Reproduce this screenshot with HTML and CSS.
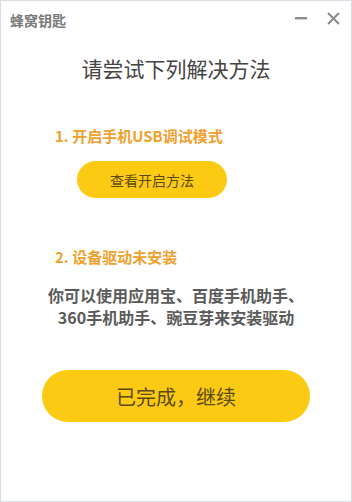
FILE: index.html
```html
<!DOCTYPE html>
<html lang="zh-CN">
<head>
    <meta charset="UTF-8">
    <title>蜂窝钥匙</title>
    <link rel="stylesheet" href="styles.css">
</head>
<body>
    <div class="window">
        <div class="titlebar">
            <span class="app-name">蜂窝钥匙</span>
            <div class="controls">
                <span class="ctrl-btn">
                    <svg width="12" height="12" viewBox="0 0 12 12"><rect x="0" y="5" width="12" height="2.4" fill="#8a8a8a"/></svg>
                </span>
                <span class="ctrl-btn">
                    <svg width="13" height="13" viewBox="0 0 13 13"><path d="M1 1 L12 12 M12 1 L1 12" stroke="#8a8a8a" stroke-width="2"/></svg>
                </span>
            </div>
        </div>

        <h1 class="heading">请尝试下列解决方法</h1>

        <div class="step">
            <div class="step-title">1. 开启手机USB调试模式</div>
            <button class="btn-small">查看开启方法</button>
        </div>

        <div class="step step-driver">
            <div class="step-title">2. 设备驱动未安装</div>
            <p class="step-text">你可以使用应用宝、百度手机助手、<br>360手机助手、豌豆芽来安装驱动</p>
        </div>

        <button class="btn-main">已完成，继续</button>
    </div>
</body>
</html>
```

FILE: styles.css
```css
html, body {
    margin: 0;
    padding: 0;
    background: #fff;
}
body {
    font-family: "Noto Sans CJK SC", "Noto Sans", sans-serif;
}
.window {
    width: 352px;
    height: 502px;
    box-sizing: border-box;
    border: 1px solid #d6dde4;
    display: flex;
    flex-direction: column;
}
.titlebar {
    height: 38px;
    display: flex;
    align-items: center;
    justify-content: space-between;
    padding-left: 9px;
}
.app-name {
    font-size: 14px;
    color: #7a7a7a;
    font-weight: bold;
}
.controls {
    display: flex;
    align-self: flex-start;
    padding-top: 2px;
    padding-right: 2px;
}
.ctrl-btn {
    width: 32px;
    height: 30px;
    display: flex;
    align-items: center;
    justify-content: center;
}
.heading {
    margin: 14px 0 0;
    text-align: center;
    font-size: 21px;
    font-weight: normal;
    color: #444;
    line-height: 30px;
}
.step {
    display: flex;
    flex-direction: column;
}
.step-driver {
    margin-top: 6px;
}
.step-title {
    margin: 43px 0 0 54px;
    font-size: 15px;
    font-weight: bold;
    color: #f0a02c;
    line-height: 20px;
}
.btn-small {
    margin: 15px 0 0 76px;
    width: 150px;
    height: 37px;
    border: none;
    border-radius: 19px;
    background: #fcc913;
    color: #5b4a12;
    font-family: inherit;
    font-size: 14px;
    padding: 0;
}
.step-text {
    margin: 17px 0 0;
    text-align: center;
    font-size: 16px;
    font-weight: bold;
    color: #5a5a5a;
    line-height: 22px;
}
.btn-main {
    margin: 42px auto 0;
    width: 268px;
    height: 52px;
    border: none;
    border-radius: 26px;
    background: #fcc913;
    color: #5b4a12;
    font-family: inherit;
    font-size: 20px;
    padding: 0;
}
```
